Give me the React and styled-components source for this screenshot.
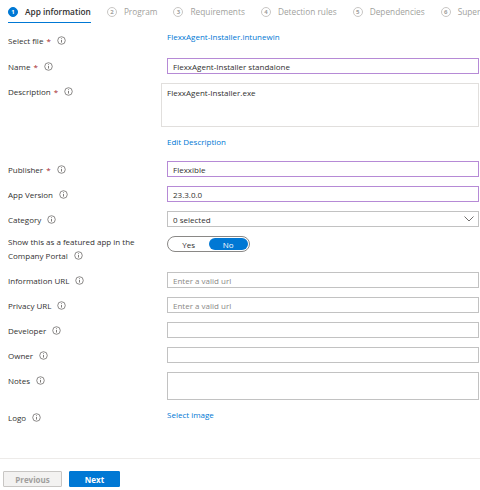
import React from 'react'
import styled, { createGlobalStyle } from 'styled-components'

const GlobalStyle = createGlobalStyle`
  html, body {
    margin: 0;
    padding: 0;
    background: #ffffff;
  }
  body {
    font-family: "Open Sans", "Noto Sans", sans-serif;
    font-size: 8px;
    color: #323130;
  }
`

const steps = [
  { n: 1, label: 'App information' },
  { n: 2, label: 'Program' },
  { n: 3, label: 'Requirements' },
  { n: 4, label: 'Detection rules' },
  { n: 5, label: 'Dependencies' },
  { n: 6, label: 'Supersedence' },
]

const InfoIcon = () => (
  <InfoSvg viewBox="0 0 10 10" width="9" height="9">
    <circle cx="5" cy="5" r="4.2" fill="none" stroke="#605e5c" strokeWidth="0.8" />
    <line x1="5" y1="4.3" x2="5" y2="7.3" stroke="#605e5c" strokeWidth="0.9" />
    <circle cx="5" cy="2.9" r="0.55" fill="#605e5c" />
  </InfoSvg>
)

const Chevron = () => (
  <ChevronSvg viewBox="0 0 10 6" width="10" height="6">
    <polyline points="0.5,0.5 5,5 9.5,0.5" fill="none" stroke="#605e5c" strokeWidth="0.9" />
  </ChevronSvg>
)

const Label = ({ text, required, lines }) => (
  <LabelBox>
    {lines ? (
      <>
        <span>{lines[0]}</span>
        <LabelLine>
          {lines[1]}
          <InfoIcon />
        </LabelLine>
      </>
    ) : (
      <LabelLine>
        {text}
        {required && <Star>*</Star>}
        <InfoIcon />
      </LabelLine>
    )}
  </LabelBox>
)

const App = () => {
  return (
    <>
      <GlobalStyle />
      <Page>
        <Tabs>
          {steps.map((s) => (
            <Tab key={s.n} $active={s.n === 1}>
              <StepCircle $active={s.n === 1}>{s.n}</StepCircle>
              {s.label}
            </Tab>
          ))}
        </Tabs>

        <Form>
          <Row $h={18}>
            <Label text="Select file" required />
            <LinkText>FlexxAgent-Installer.intunewin</LinkText>
          </Row>

          <Row>
            <Label text="Name" required />
            <Input $filled>FlexxAgent-Installer standalone</Input>
          </Row>

          <Row $top>
            <Label text="Description" required />
            <DescArea>FlexxAgent-Installer.exe</DescArea>
          </Row>

          <Row>
            <span />
            <LinkText>Edit Description</LinkText>
          </Row>

          <Row>
            <Label text="Publisher" required />
            <Input $filled>Flexxible</Input>
          </Row>

          <Row>
            <Label text="App Version" />
            <Input $filled>23.3.0.0</Input>
          </Row>

          <Row>
            <Label text="Category" />
            <Select>
              0 selected
              <Chevron />
            </Select>
          </Row>

          <Row $top>
            <Label lines={['Show this as a featured app in the', 'Company Portal']} />
            <Toggle>
              <ToggleOption>Yes</ToggleOption>
              <ToggleOption $on>No</ToggleOption>
            </Toggle>
          </Row>

          <Row>
            <Label text="Information URL" />
            <Input $placeholder>Enter a valid url</Input>
          </Row>

          <Row>
            <Label text="Privacy URL" />
            <Input $placeholder>Enter a valid url</Input>
          </Row>

          <Row>
            <Label text="Developer" />
            <Input />
          </Row>

          <Row>
            <Label text="Owner" />
            <Input />
          </Row>

          <Row $top>
            <Label text="Notes" />
            <NotesArea />
          </Row>

          <Row>
            <Label text="Logo" />
            <LinkText>Select image</LinkText>
          </Row>
        </Form>

        <Footer>
          <Button disabled>Previous</Button>
          <Button $primary>Next</Button>
        </Footer>
      </Page>
    </>
  )
}

export default App

const Page = styled.div`
  height: 490px;
  display: flex;
  flex-direction: column;
  overflow: hidden;
`

const Tabs = styled.div`
  display: flex;
  padding-left: 8px;
  height: 23px;
  white-space: nowrap;
  overflow: hidden;
`

const Tab = styled.div`
  display: flex;
  align-items: center;
  gap: 7px;
  margin-right: 16px;
  height: 21px;
  padding-top: 1px;
  font-size: 8.3px;
  color: ${(p) => (p.$active ? '#323130' : '#a19f9d')};
  font-weight: ${(p) => (p.$active ? 600 : 400)};
  border-bottom: 2px solid ${(p) => (p.$active ? '#0078d4' : 'transparent')};
`

const StepCircle = styled.span`
  width: 10px;
  height: 10px;
  box-sizing: border-box;
  border-radius: 50%;
  display: flex;
  align-items: center;
  justify-content: center;
  font-size: 6px;
  font-weight: 700;
  border: 1px solid ${(p) => (p.$active ? '#0078d4' : '#c8c6c4')};
  background: ${(p) => (p.$active ? '#0078d4' : '#ffffff')};
  color: ${(p) => (p.$active ? '#ffffff' : '#a19f9d')};
`

const Form = styled.div`
  display: flex;
  flex-direction: column;
  gap: 9px;
  padding: 8px 1px 0 8px;
`

const Row = styled.div`
  display: grid;
  grid-template-columns: 159px 1fr;
  align-items: ${(p) => (p.$top ? 'start' : 'center')};
  min-height: ${(p) => p.$h || 16}px;
`

const LabelBox = styled.div`
  display: flex;
  flex-direction: column;
  line-height: 11px;
  color: #323130;
`

const LabelLine = styled.span`
  display: flex;
  align-items: center;
  min-height: 16px;
`

const Star = styled.span`
  color: #a4262c;
  margin-left: 3px;
`

const InfoSvg = styled.svg`
  margin-left: 6px;
  flex-shrink: 0;
`

const LinkText = styled.span`
  color: #0078d4;
  align-self: start;
  line-height: 12px;
`

const Input = styled.div`
  height: 16px;
  box-sizing: border-box;
  border: 1px solid ${(p) => (p.$filled ? '#b68ad6' : '#c2c2c2')};
  padding: 0 5px;
  display: flex;
  align-items: center;
  color: ${(p) => (p.$placeholder ? '#8a8886' : '#323130')};
`

const DescArea = styled.div`
  height: 44px;
  box-sizing: border-box;
  margin-left: -6px;
  border: 1px solid #e1dfdd;
  padding: 3px 5px;
  line-height: 11px;
`

const NotesArea = styled.div`
  height: 28px;
  box-sizing: border-box;
  border: 1px solid #c2c2c2;
`

const Select = styled.div`
  height: 16px;
  box-sizing: border-box;
  border: 1px solid #c2c2c2;
  padding: 0 4px 0 5px;
  display: flex;
  align-items: center;
  justify-content: space-between;
`

const ChevronSvg = styled.svg`
  display: block;
`

const Toggle = styled.div`
  width: 83px;
  height: 16px;
  box-sizing: border-box;
  border: 1px solid #8a8886;
  border-radius: 8px;
  display: flex;
  padding: 1px;
`

const ToggleOption = styled.div`
  flex: 1;
  border-radius: 7px;
  display: flex;
  align-items: center;
  justify-content: center;
  background: ${(p) => (p.$on ? '#0078d4' : 'transparent')};
  color: ${(p) => (p.$on ? '#ffffff' : '#323130')};
`

const Footer = styled.div`
  margin-top: auto;
  border-top: 1px solid #edebe9;
  padding: 12px 0 3px 3px;
  display: flex;
  gap: 7px;
`

const Button = styled.button`
  height: 16px;
  box-sizing: border-box;
  padding: 0;
  width: ${(p) => (p.$primary ? '51px' : '59px')};
  font-family: "Open Sans", "Noto Sans", sans-serif;
  font-size: 8px;
  font-weight: 700;
  border-radius: 1px;
  border: 1px solid ${(p) => (p.$primary ? '#0078d4' : '#c8c6c4')};
  background: ${(p) => (p.$primary ? '#0078d4' : '#f3f2f1')};
  color: ${(p) => (p.$primary ? '#ffffff' : '#a19f9d')};
`
